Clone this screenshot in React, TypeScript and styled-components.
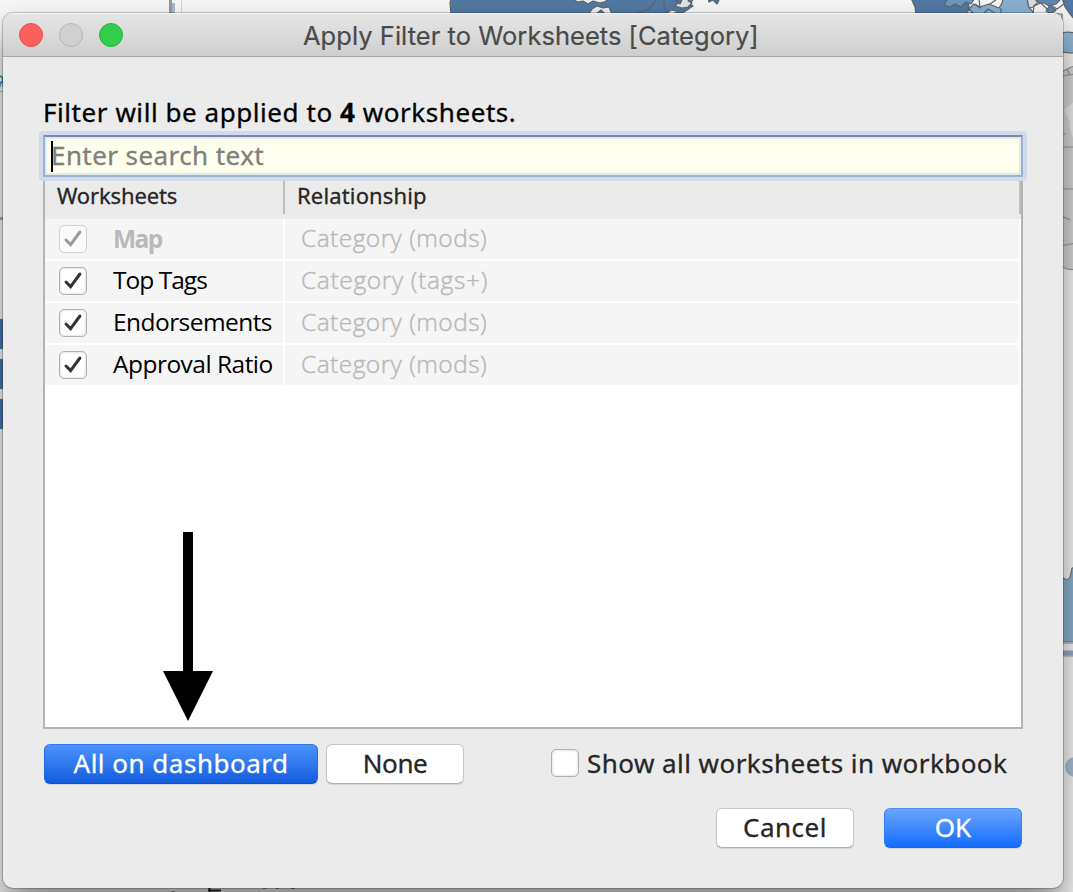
import React, { useState } from "react";
import styled, { createGlobalStyle, css } from "styled-components";

const GlobalStyle = createGlobalStyle`
  * { box-sizing: border-box; }
  body { margin: 0; overflow: hidden; }
`;

const lucida = `"Noto Sans", "Open Sans", sans-serif`;
const benton = `"Open Sans", "Noto Sans", sans-serif`;

const Desktop = styled.div`
  position: relative;
  width: 1073px;
  height: 892px;
  padding: 13px 10px 4px 3px;
  overflow: hidden;
  background: #f6f6f6;
`;

const Backdrop = styled.svg`
  position: absolute;
  inset: 0;
`;

const Window = styled.section`
  position: relative;
  display: flex;
  flex-direction: column;
  height: 875px;
  border-radius: 10px;
  background: #ebebeb;
  box-shadow: 0 0 0 1px rgba(0, 0, 0, 0.2), 0 20px 34px rgba(0, 0, 0, 0.46);
  overflow: hidden;
`;

const TitleBar = styled.header`
  display: flex;
  flex: none;
  align-items: center;
  height: 44px;
  padding: 0 16px;
  background: linear-gradient(#e6e6e6, #cecece);
  border-top: 1px solid #f5f5f5;
  border-bottom: 1px solid #a6a6a6;
`;

const Lights = styled.div`
  display: flex;
  gap: 16px;
  width: 284px;
`;

const Light = styled.span<{ $fill: string; $edge: string }>`
  width: 24px;
  height: 24px;
  border-radius: 50%;
  background: ${(p) => p.$fill};
  border: 1px solid ${(p) => p.$edge};
`;

const Label = styled.span<{
  $size: number;
  $track?: number;
  $color?: string;
  $weight?: number;
  $font?: string;
  $ink?: number;
  $lift?: number;
  $drop?: number;
}>`
  padding: ${(p) => p.$drop ?? 0}px 0 ${(p) => p.$lift ?? 0}px;
  font-family: ${(p) => p.$font ?? lucida};
  font-size: ${(p) => p.$size}px;
  font-weight: ${(p) => p.$weight ?? 400};
  letter-spacing: ${(p) => p.$track ?? 0}px;
  color: ${(p) => p.$color ?? "#262626"};
  -webkit-text-stroke: ${(p) => p.$ink ?? 0.3}px currentColor;
  line-height: 1;
  white-space: pre;
`;

const Body = styled.div`
  display: flex;
  flex-direction: column;
  padding: 42px 40px 0 40px;
`;

const Summary = styled.div`
  height: 37px;
`;

const Search = styled.div`
  position: relative;
  z-index: 1;
  display: flex;
  align-items: center;
  height: 42px;
  padding-left: 6px;
  margin-top: -1px;
  background: #ffffee;
  border: 2px solid #a0b0c8;
  border-top-color: #7b8ba6;
  border-radius: 1px;
  box-shadow: inset 0 0 0 2px #dfecee, 0 0 0 4px #cfdbec;
`;

const Caret = styled.i`
  width: 2px;
  height: 31px;
  margin-right: -2px;
  background: #000;
`;

const Table = styled.div`
  height: 552px;
  background: #fff;
  border: 2px solid #b4b4b4;
  border-top: 0;
`;

const HeaderRow = styled.div`
  display: flex;
  height: 42px;
  background: #ebebeb;
`;

const HeaderCell = styled.div<{ $w?: number; $pad: number }>`
  ${(p) => (p.$w ? css`width: ${p.$w}px;` : css`flex: 1;`)}
  height: 37px;
  padding: 7px 0 0 ${(p) => p.$pad}px;
  border-right: 2px solid #bdbdbd;
`;

const Row = styled.div`
  display: flex;
  gap: 2px;
  height: 42px;
  padding: 0 2px 2px 0;
`;

const Cell = styled.div<{ $w?: number; $pad: number }>`
  display: flex;
  align-items: center;
  ${(p) => (p.$w ? css`width: ${p.$w}px;` : css`flex: 1;`)}
  padding-left: ${(p) => p.$pad}px;
  background: #f5f5f5;
`;

const Box = styled.button<{ $dim?: boolean; $gap: number }>`
  display: grid;
  flex: none;
  place-items: center;
  width: 28px;
  height: 28px;
  margin: 0 ${(p) => p.$gap}px 0 0;
  padding: 0;
  border: 1px solid ${(p) => (p.$dim ? "#d0d0d0" : "#b0b0b0")};
  border-radius: 5px;
  background: ${(p) => (p.$dim ? "#fafafa" : "#fff")};
  box-shadow: ${(p) => (p.$dim ? "none" : "inset 0 0 3px rgba(0,0,0,.2)")};
`;

const Check = ({ dim }: { dim?: boolean }) => (
  <svg width="26" height="26" viewBox="0 0 26 26" fill="none">
    <path
      d="M6 14 L10.6 18.6 L19.9 6"
      stroke={dim ? "#9a9a9a" : "#333"}
      strokeWidth="3"
      strokeLinecap="round"
      strokeLinejoin="miter"
    />
  </svg>
);

const Actions = styled.div`
  display: flex;
  align-items: center;
  gap: 8px;
  height: 40px;
  margin: 15px 0 0 1px;
`;

const Footer = styled.footer`
  display: flex;
  justify-content: flex-end;
  gap: 30px;
  margin: 24px 1px 0 0;
`;

const Button = styled.button<{ $w: number; $tone?: "deep" | "bright" }>`
  display: flex;
  align-items: center;
  justify-content: center;
  width: ${(p) => p.$w}px;
  height: 40px;
  padding: 0;
  border: 1px solid #c6c6c6;
  border-bottom-color: #adadad;
  border-radius: 6px;
  background: #fff;
  box-shadow: 0 1px 1px rgba(0, 0, 0, 0.1);
  ${(p) => p.$tone === "deep" && css`
    background: linear-gradient(#4c94fb, #125cde);
    border-color: #2f7bee #1f69e4 #0e50cb;
  `}
  ${(p) => p.$tone === "bright" && css`
    background: linear-gradient(#6aa6f9, #146bff);
    border-color: #4a8ef6 #2f7ffa #1264f2;
  `}
`;

const ShowAll = styled.div`
  display: flex;
  align-items: center;
  height: 30px;
  margin: 0 0 2px 79px;
`;

const Arrow = styled.svg`
  position: absolute;
  left: 160px;
  top: 519px;
`;

const worksheets = [
  { name: "Map", relation: "Category (mods)", locked: true, track: -1.6, relTrack: 0.45 },
  { name: "Top Tags", relation: "Category (tags+)", track: -0.98, relTrack: 0.64 },
  { name: "Endorsements", relation: "Category (mods)", track: -0.56, relTrack: 0.45 },
  { name: "Approval Ratio", relation: "Category (mods)", track: -0.52, relTrack: 0.45 },
];

const WorkbookBackdrop = () => (
  <Backdrop width="1073" height="892" viewBox="0 0 1073 892">
    <path d="M170.500 0V13" stroke="#9a9a9a" strokeWidth="3" />
    <path d="M173.500 3V13" stroke="#a9bad3" strokeWidth="3" />
    <path d="M181.500 0V13" stroke="#d4d4d4" />

    <g stroke="#5f6468" strokeWidth="1.2" strokeLinejoin="round">
      <path d="M451 -2L450 3L451 15H676L684 12L693 6L690 4L694 -2Z" fill="#5079a3" />
      <path d="M573 -2L577 2L583 1L588 4L593 1L600 3L607 1L605 -2Z" fill="#eee" />
      <path d="M589 14L592 9L597 6L603 8L609 7L612 14L605 14L601 10L596 14Z" fill="#eee" />
      <path d="M674 -2L678 3L675 6L682 8L688 7L692 3L688 1L691 -2L683 -2L680 4Z" fill="#e2e5e8" />
      <path d="M666 14L671 10L678 11L673 14Z" fill="#e2e5e8" />
      <path d="M636 13Q652 11 656 -1M664 -1Q663 8 668 13" fill="none" />
      <path d="M708 -2L709 2L713 0L717 4L720 -2Z" fill="#5079a3" />
      <path d="M911 -2L915 7L916 15H971L967 -2Z" fill="#4f78a3" />
      <path d="M948 -2L944 5L950 7L955 4L961 7L966 2L971 4L975 -2Z" fill="#6c98bd" />
      <path d="M970 15L968 10L974 4L980 7L989 4L999 8L1002 3L1003 -2H1027L1029 7L1033 12V15Z" fill="#87afcd" />
      <path d="M975 4L980 8L979 -1M984 13L988 9L995 13M1001 8L1001 14M990 4L997 -1" fill="none" />
      <path d="M967 13L969 9L973 13Z" fill="#eee" />
      <path d="M1027 -2L1029 8L1033 7L1038 2L1033 -2Z" fill="#ddd" />
      <path d="M1033 14L1034 6L1041 3L1047 9L1051 5L1057 9L1064 4L1062 -2H1075V35H1062V14Z" fill="#f2f2f2" />
      <path d="M1036 -2L1039 3L1044 3L1049 6L1056 4L1062 -2Z" fill="#5c88b0" />
      <path d="M1046 11L1050 6L1056 10L1051 14Z" fill="#5c88b0" />
      <path d="M1063 -2L1065 7L1070 14L1076 21V-2Z" fill="#4f78a3" />
      <path d="M1061 33L1067 32L1076 33V53L1069 53L1061 52Z" fill="#90b6d3" />
    </g>
    <g stroke="#9a9a9a" strokeWidth="1.2">
      <path d="M1060 73L1067 69L1076 65V270L1067 269L1060 266Z" fill="#d7d7d7" />
      <path d="M1067 69L1070 75M1060 76L1076 74M1060 134H1066M1060 147H1076M1060 189H1076M1060 215L1070 220M1060 246L1076 243" fill="none" />
    </g>
    <path d="M1064 110Q1071 119 1070 130Q1076 145 1076 145V100Z" fill="#ececec" />
    <path d="M1060 576L1067 580L1070 577L1072 568L1076 567V642H1060Z" fill="#8ab3cf" stroke="#686d70" />
    <path d="M1060 643H1076" stroke="#bbb" strokeWidth="2" />
    <path d="M1060 653H1076" stroke="#97a9c5" strokeWidth="5" />
    <path d="M1060 656H1076" stroke="#999" strokeWidth="1" />
    <circle cx="1075" cy="767" r="10" fill="#acbdd7" />

    <path d="M0 76Q3 77 3 81V87M3 81Q-1 83 0 87" fill="none" stroke="#348baa" strokeWidth="1.500" />
    <path d="M0 91.500H3" stroke="#8fc1d2" />
    <path d="M0 218.500H3" stroke="#96a9ca" strokeWidth="3" />
    <path d="M0 319H3V349H0ZM0 359H3V389H0ZM0 399H3V429H0Z" fill="#4878aa" />
    <path d="M209.500 887V892M208 890.500H221" stroke="#222" strokeWidth="2" />
    <path d="M171 891.500H175M263 888.500H266M276 888.500H279M291 888.500H295" stroke="#888" />
  </Backdrop>
);

export default function App() {
  const [showAll, setShowAll] = useState(false);
  return (
    <Desktop>
      <GlobalStyle />
      <WorkbookBackdrop />
      <Window>
        <TitleBar>
          <Lights>
            <Light $fill="#fd605b" $edge="#e2504b" />
            <Light $fill="#d0d0d0" $edge="#b4b4b4" />
            <Light $fill="#34cc4b" $edge="#28b23c" />
          </Lights>
          <Label $font="Inter, sans-serif" $size={25.5} $track={0.03} $color="#4a4a4a" $ink={0.2} $drop={2}>
            Apply Filter to Worksheets [Category]
          </Label>
        </TitleBar>
        <Body>
          <Summary>
            <Label $size={26} $track={0.56} $color="#000">Filter will be applied to <b>4</b> worksheets.</Label>
          </Summary>
          <Search>
            <Caret />
            <Label $size={26} $track={0.42} $lift={2} $color="#80807a">Enter search text</Label>
          </Search>
          <Table>
            <HeaderRow>
              <HeaderCell $w={240} $pad={12}><Label $size={22} $track={-0.15}>Worksheets</Label></HeaderCell>
              <HeaderCell $pad={12}><Label $size={22} $track={0.15}>Relationship</Label></HeaderCell>
            </HeaderRow>
            {worksheets.map((w) => (
              <Row key={w.name}>
                <Cell $w={238} $pad={14}>
                  <Box $dim={w.locked} $gap={26}><Check dim={w.locked} /></Box>
                  <Label
                    $font={benton}
                    $size={24.5}
                    $track={w.track}
                    $lift={w.locked ? 0 : 2}
                    $ink={0}
                    $weight={w.locked ? 700 : 400}
                    $color={w.locked ? "#b9b9b9" : "#000"}
                  >
                    {w.name}
                  </Label>
                </Cell>
                <Cell $pad={16}>
                  <Label $font={benton} $size={24.5} $track={w.relTrack} $lift={2} $ink={0.4} $weight={300} $color="#b8b8b8">
                    {w.relation}
                  </Label>
                </Cell>
              </Row>
            ))}
          </Table>
          <Actions>
            <Button $w={274} $tone="deep"><Label $size={26} $track={0.5} $lift={2} $color="#fff">All on dashboard</Label></Button>
            <Button $w={138}><Label $size={26} $track={-0.4} $lift={2}>None</Label></Button>
            <ShowAll>
              <Box $gap={8} onClick={() => setShowAll(!showAll)}>{showAll && <Check />}</Box>
              <Label $size={26} $track={0.45}>Show all worksheets in workbook</Label>
            </ShowAll>
          </Actions>
          <Footer>
            <Button $w={138}><Label $size={26} $track={0.5} $lift={2}>Cancel</Label></Button>
            <Button $w={138} $tone="bright"><Label $size={26} $lift={2} $color="#fff">OK</Label></Button>
          </Footer>
        </Body>
        <Arrow width="50" height="189" viewBox="0 0 50 189">
          <path d="M20 0H30V139H50L25 189L0 139H20Z" fill="#000" />
        </Arrow>
      </Window>
    </Desktop>
  );
}
